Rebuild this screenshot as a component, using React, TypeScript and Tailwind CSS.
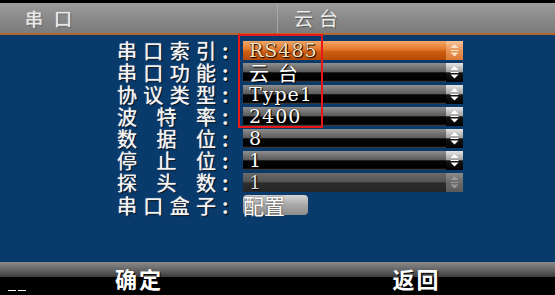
import React from "react";

const cjk = '"Noto Sans CJK SC", "Noto Sans", sans-serif';
const serif = '"DejaVu Serif", "Liberation Serif", serif';

type Variant = "orange" | "normal" | "disabled";

function Arrows({ color }: { color: string }) {
  return (
    <svg width="17" height="19" viewBox="0 0 17 19">
      <polygon points="8.5,3 12.5,7 4.5,7" fill={color} />
      <rect x="4.5" y="9" width="8" height="1" fill={color} />
      <polygon points="4.5,11.5 12.5,11.5 8.5,15.5" fill={color} />
    </svg>
  );
}

function Field({ value, variant }: { value: string; variant: Variant }) {
  const isCjk = /[\u4e00-\u9fff]/.test(value);
  const body =
    variant === "orange"
      ? "bg-[linear-gradient(to_bottom,#f2a868_0%,#e4772a_45%,#cf5d12_55%,#b44a04_100%)]"
      : variant === "disabled"
      ? "bg-[linear-gradient(to_bottom,#6a6a6a_0%,#545454_46%,#2c2c2c_52%,#262626_100%)]"
      : "bg-[linear-gradient(to_bottom,#8e8e8e_0%,#5c5c5c_45%,#060606_52%,#000000_90%,#4a4a4a_100%)]";
  const box =
    variant === "orange"
      ? "bg-[linear-gradient(to_bottom,#f6c49a_0%,#e99457_50%,#dc7a36_100%)]"
      : variant === "disabled"
      ? "bg-[linear-gradient(to_bottom,#8a8a8a_0%,#6a6a6a_50%,#5a5a5a_100%)]"
      : "bg-[linear-gradient(to_bottom,#e6e6e6_0%,#a4a4a4_45%,#141414_52%,#000000_100%)]";
  const arrowColor =
    variant === "orange" ? "#fbe3c4" : variant === "disabled" ? "#9a9a9a" : "#ffffff";
  const textColor =
    variant === "orange" ? "text-[#fbe0bc]" : variant === "disabled" ? "text-[#d8d8d8]" : "text-white";
  return (
    <div className={`flex h-[19px] w-[220px] items-center ${body}`}>
      <div
        className={`flex-1 pl-[6px] leading-[19px] ${textColor} ${
          isCjk ? "text-[20px] tracking-[9px]" : "text-[19px] tracking-[1px]"
        } [text-shadow:0_0_1px_#000,1px_1px_1px_#000]`}
        style={{ fontFamily: isCjk ? cjk : serif }}
      >
        {value}
      </div>
      <div className={`flex h-[19px] w-[17px] items-center justify-center ${box}`}>
        <Arrows color={arrowColor} />
      </div>
    </div>
  );
}

function Label({ text }: { text: string }) {
  const chars = Array.from(text);
  return (
    <div className="flex items-center" style={{ fontFamily: cjk }}>
      <div className="flex w-[99px] justify-between text-[20px] leading-[19px] text-[#f4f4f4] [text-shadow:0_0_1px_#fff,1px_1px_1px_#000]">
        {chars.map((c, i) => (
          <span key={i}>{c}</span>
        ))}
      </div>
      <div className="w-[27px] pl-[6px] text-[20px] font-bold leading-[19px] text-[#f4f4f4] [text-shadow:1px_1px_1px_#000]">
        :
      </div>
    </div>
  );
}

const rows: { label: string; value: string; variant: Variant }[] = [
  { label: "串口索引", value: "RS485", variant: "orange" },
  { label: "串口功能", value: "云台", variant: "normal" },
  { label: "协议类型", value: "Type1", variant: "normal" },
  { label: "波特率", value: "2400", variant: "normal" },
  { label: "数据位", value: "8", variant: "normal" },
  { label: "停止位", value: "1", variant: "normal" },
  { label: "探头数", value: "1", variant: "disabled" },
];

export default function App() {
  return (
    <div className="relative flex h-[295px] w-[555px] flex-col overflow-hidden bg-black">
      <div className="h-[3px] bg-black" />
      <div className="flex h-[30px] bg-[linear-gradient(to_bottom,#9c9c9c_0%,#8a8a8a_50%,#7c7c7c_100%)]">
        <div
          className="flex w-[278px] items-center border-r border-[#a8a8a8] pl-[25px] text-[18px] tracking-[11px] text-[#e8e8e8] [text-shadow:0_0_1px_#fff,1px_1px_1px_#555]"
          style={{ fontFamily: cjk }}
        >
          串口
        </div>
        <div
          className="flex flex-1 items-center pl-[16px] text-[19px] tracking-[6px] text-[#ececec] [text-shadow:1px_1px_1px_#555]"
          style={{ fontFamily: cjk }}
        >
          云台
        </div>
      </div>
      <div className="h-[2px] bg-[#b4642c]" />
      <div className="flex flex-1 flex-col gap-[3px] bg-[#083a6c] pl-[117px] pt-[6px]">
        {rows.map((r) => (
          <div key={r.label} className="flex h-[19px] items-center">
            <Label text={r.label} />
            <Field value={r.value} variant={r.variant} />
          </div>
        ))}
        <div className="flex h-[20px] items-center">
          <Label text="串口盒子" />
          <div
            className="flex h-[20px] w-[65px] items-center rounded-[4px] bg-[linear-gradient(to_bottom,#d4d4d4_0%,#a8a8a8_50%,#8c8c8c_100%)] text-[21px] leading-[20px] text-white [text-shadow:0_0_2px_#333]"
            style={{ fontFamily: cjk }}
          >
            配置
          </div>
        </div>
      </div>
      <div className="flex h-[33px] items-center bg-[linear-gradient(to_bottom,#8a8a8a_0px,#5a5a5a_10px,#3a3a3a_15px,#000000_15px,#000000_100%)]">
        <div
          className="flex w-[278px] justify-center text-[22px] font-bold tracking-[2px] text-white [text-shadow:1px_1px_1px_#000]"
          style={{ fontFamily: cjk }}
        >
          确定
        </div>
        <div
          className="flex w-[277px] justify-center text-[22px] font-bold tracking-[2px] text-white [text-shadow:1px_1px_1px_#000]"
          style={{ fontFamily: cjk }}
        >
          返回
        </div>
      </div>
      <div className="absolute bottom-[4px] left-[8px] flex gap-[2px]">
        <div className="h-[1px] w-[8px] bg-white" />
        <div className="h-[1px] w-[8px] bg-white" />
      </div>
      <div className="absolute left-[238px] top-[34px] h-[94px] w-[85px] border-2 border-[#e81818]" />
    </div>
  );
}
